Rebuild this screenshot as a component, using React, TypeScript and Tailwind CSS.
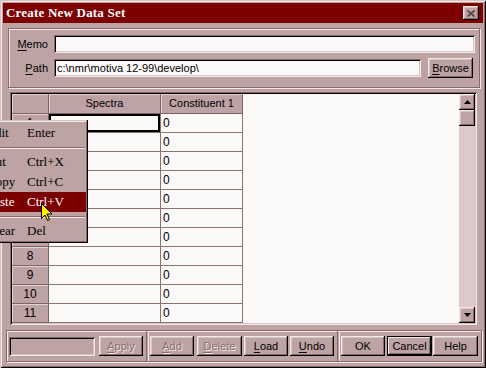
import React from "react";

const RAISED =
  "shadow-[inset_-1px_-1px_0_#000000,inset_1px_1px_0_#f3e9e9,inset_-2px_-2px_0_#876b6b,inset_2px_2px_0_#d6c3c3]";
const SUNKEN =
  "shadow-[inset_1px_1px_0_#876b6b,inset_-1px_-1px_0_#f3e9e9,inset_2px_2px_0_#000000,inset_-2px_-2px_0_#d6c3c3]";
const ETCHED = "border border-[#876b6b] shadow-[inset_1px_1px_0_#f3e9e9,1px_1px_0_#f3e9e9]";

function Btn({
  children,
  w,
  ml,
  disabled,
  def,
}: {
  children: React.ReactNode;
  w: string;
  ml: string;
  disabled?: boolean;
  def?: boolean;
}) {
  return (
    <div
      className={`${w} ${ml} h-[20px] shrink-0 flex items-center justify-center bg-[#bda3a3] ${
        def ? "border border-black shadow-[inset_-1px_-1px_0_#000000,inset_1px_1px_0_#f3e9e9,inset_-2px_-2px_0_#876b6b]" : RAISED
      } ${disabled ? "text-[#8a6e6e] [text-shadow:1px_1px_0_#f3e9e9]" : "text-black"}`}
    >
      {children}
    </div>
  );
}

function U({ c }: { c: string }) {
  return <span className="underline underline-offset-[2px]">{c}</span>;
}

function Arrow({ up }: { up?: boolean }) {
  return (
    <svg width="7" height="4" viewBox="0 0 7 4">
      {up ? <polygon points="3.5,0 7,4 0,4" fill="#000" /> : <polygon points="0,0 7,0 3.5,4" fill="#000" />}
    </svg>
  );
}

export default function App() {
  const rows = Array.from({ length: 11 }, (_, i) => i + 1);
  return (
    <div className="relative w-[486px] h-[368px] overflow-hidden bg-[#bda3a3] p-[3px] flex flex-col font-['Liberation_Sans',Arial,sans-serif] text-[11px] text-black shadow-[inset_1px_1px_0_#d6c3c3,inset_-1px_-1px_0_#000000,inset_2px_2px_0_#f3e9e9,inset_-2px_-2px_0_#876b6b]">
      {/* Title bar */}
      <div className="h-[20px] shrink-0 bg-[#7d0000] flex items-center justify-between pl-[3px] pr-[4px]">
        <span className="text-white font-bold text-[13px] font-['Liberation_Serif','Times_New_Roman',serif] tracking-[0.2px]">
          Create New Data Set
        </span>
        <div className={`w-[16px] h-[14px] bg-[#bda3a3] flex items-center justify-center ${RAISED}`}>
          <svg width="8" height="7" viewBox="0 0 8 7">
            <path d="M0.5 0.5 L7.5 6.5 M7.5 0.5 L0.5 6.5" stroke="#5a4545" strokeWidth="1.8" />
          </svg>
        </div>
      </div>

      {/* Memo / Path group */}
      <div className={`mt-[5px] ml-[5px] w-[472px] h-[60px] shrink-0 ${ETCHED} flex flex-col pt-[6px]`}>
        <div className="flex items-center h-[18px]">
          <div className="w-[39px] text-right">
            <U c="M" />
            emo
          </div>
          <div className={`ml-[6px] w-[421px] h-[18px] bg-[#fbf8f8] ${SUNKEN}`} />
        </div>
        <div className="flex items-center h-[20px] mt-[5px]">
          <div className="w-[39px] text-right">
            <U c="P" />
            ath
          </div>
          <div className={`ml-[6px] w-[367px] h-[18px] bg-[#fbf8f8] ${SUNKEN} flex items-center pl-[3px]`}>
            c:\nmr\motiva 12-99\develop\
          </div>
          <Btn w="w-[45px]" ml="ml-[7px]">
            <U c="B" />
            rowse
          </Btn>
        </div>
      </div>

      {/* Grid */}
      <div className={`mt-[4px] ml-[7px] w-[467px] h-[233px] shrink-0 p-[2px] bg-[#fbf8f8] ${SUNKEN} flex`}>
        <div className="flex-1 flex flex-col">
          <div className="flex h-[20px]">
            <div className="w-[37px] bg-[#bda3a3] border-r border-b border-[#7d6464] shadow-[inset_1px_1px_0_#e3d4d4]" />
            <div className="w-[112px] bg-[#bda3a3] border-r border-b border-[#7d6464] shadow-[inset_1px_1px_0_#e3d4d4] flex items-center justify-center">
              Spectra
            </div>
            <div className="w-[82px] bg-[#bda3a3] border-r border-b border-[#7d6464] shadow-[inset_1px_1px_0_#e3d4d4] flex items-center justify-center">
              Constituent 1
            </div>
            <div className="flex-1" />
          </div>
          {rows.map((r) => (
            <div key={r} className="flex h-[19px]">
              <div className="w-[37px] bg-[#bda3a3] border-r border-b border-[#7d6464] shadow-[inset_1px_1px_0_#e3d4d4] flex items-center justify-center text-[12px]">
                {r}
              </div>
              <div
                className={`w-[112px] border-r border-b border-[#8c7373] ${
                  r === 1 ? "shadow-[inset_0_0_0_2px_#000000]" : ""
                }`}
              />
              <div className="w-[82px] border-r border-b border-[#8c7373] flex items-center pl-[2px] text-[12px]">0</div>
              <div className="flex-1" />
            </div>
          ))}
        </div>
        {/* Scrollbar */}
        <div className="w-[16px] flex flex-col bg-[#dccaca]">
          <div className={`h-[16px] bg-[#bda3a3] ${RAISED} flex items-center justify-center`}>
            <Arrow up />
          </div>
          <div className={`h-[16px] bg-[#bda3a3] ${RAISED}`} />
          <div className="flex-1" />
          <div className={`h-[16px] bg-[#bda3a3] ${RAISED} flex items-center justify-center`}>
            <Arrow />
          </div>
        </div>
      </div>

      {/* Bottom bar */}
      <div className={`mt-[5px] ml-[3px] w-[476px] h-[32px] shrink-0 ${ETCHED} flex items-center`}>
        <div className={`ml-[2px] w-[86px] h-[19px] bg-[#bda3a3] ${SUNKEN}`} />
        <Btn w="w-[44px]" ml="ml-[4px]" disabled>
          <U c="A" />
          pply
        </Btn>
        <div className="ml-[3px] w-[2px] self-stretch border-l border-[#876b6b] shadow-[1px_0_0_#f3e9e9]" />
        <Btn w="w-[44px]" ml="ml-[2px]" disabled>
          <U c="A" />
          dd
        </Btn>
        <Btn w="w-[45px]" ml="ml-[3px]" disabled>
          <U c="D" />
          elete
        </Btn>
        <Btn w="w-[44px]" ml="ml-[2px]">
          <U c="L" />
          oad
        </Btn>
        <Btn w="w-[44px]" ml="ml-[2px]">
          <U c="U" />
          ndo
        </Btn>
        <div className="ml-[3px] w-[2px] self-stretch border-l border-[#876b6b] shadow-[1px_0_0_#f3e9e9]" />
        <Btn w="w-[44px]" ml="ml-[2px]">OK</Btn>
        <Btn w="w-[45px]" ml="ml-[2px]" def>
          Cancel
        </Btn>
        <Btn w="w-[45px]" ml="ml-[1px]">Help</Btn>
      </div>

      {/* Context menu */}
      <div
        className={`absolute left-[-30px] top-[120px] w-[118px] h-[123px] bg-[#bda3a3] pt-[3px] px-[2px] font-['Liberation_Serif','Times_New_Roman',serif] text-[13px] shadow-[inset_-1px_-1px_0_#000000,inset_1px_1px_0_#d6c3c3,inset_-2px_-2px_0_#876b6b,inset_2px_2px_0_#f3e9e9]`}
      >
        {[
          { l: "Edit", s: "Enter" },
          { sep: true },
          { l: "Cut", s: "Ctrl+X" },
          { l: "Copy", s: "Ctrl+C" },
          { l: "Paste", s: "Ctrl+V", hi: true },
          { sep: true },
          { l: "Clear", s: "Del" },
        ].map((it, i) =>
          it.sep ? (
            <div key={i} className="h-[9px] pt-[4px] pr-[1px]">
              <div className="h-[1px] bg-[#876b6b]" />
              <div className="h-[1px] bg-[#f3e9e9]" />
            </div>
          ) : (
            <div
              key={i}
              className={`flex items-center h-[20px] pl-[15px] ${it.hi ? "bg-[#7d0000] text-white" : "text-black"}`}
            >
              <span className="w-[40px] shrink-0">{it.l}</span>
              <span>{it.s}</span>
            </div>
          )
        )}
      </div>

      {/* Mouse cursor */}
      <svg className="absolute left-[41px] top-[203px]" width="12" height="19" viewBox="0 0 12 19">
        <path
          d="M0.5 0.5 L0.5 15.5 L4 12 L6.5 17.5 L8.5 16.5 L6 11 L11 11 Z"
          fill="#ffee00"
          stroke="#000"
          strokeWidth="1"
          strokeLinejoin="miter"
        />
      </svg>
    </div>
  );
}
